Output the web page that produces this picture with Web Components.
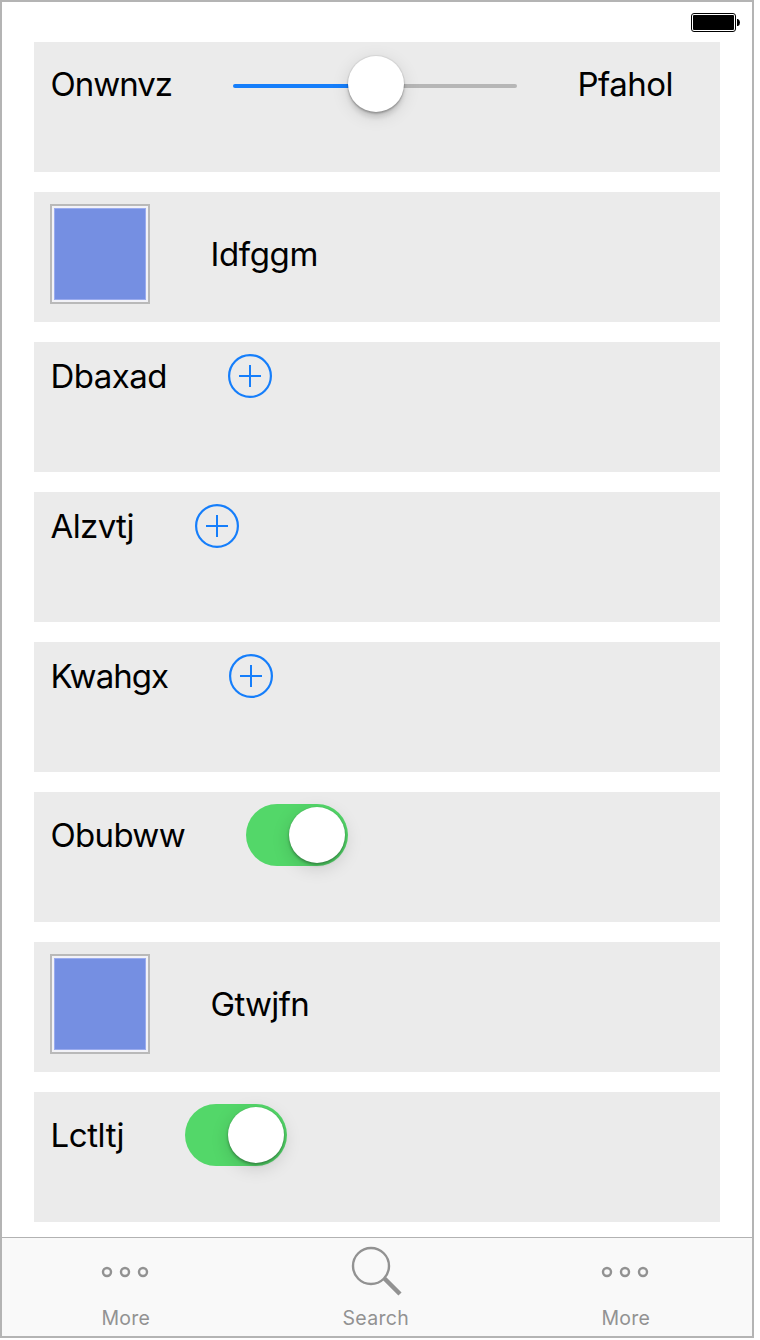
<!DOCTYPE html>
<html lang="en">
<head>
<meta charset="utf-8">
<title>Controls</title>
<style>
html, body { margin: 0; background: #fff; }
body { font-family: Inter, "Liberation Sans", sans-serif; color: #000; }
</style>
</head>
<body>
<phone-screen>
  <battery-status slot="status"></battery-status>
  <control-row><fit-label width="123">Onwnvz</fit-label><value-slider></value-slider><fit-label width="97">Pfahol</fit-label></control-row>
  <control-row><image-well></image-well><fit-label width="109">Idfggm</fit-label></control-row>
  <control-row><fit-label width="118">Dbaxad</fit-label><add-button></add-button></control-row>
  <control-row><fit-label width="85">Alzvtj</fit-label><add-button></add-button></control-row>
  <control-row><fit-label width="119">Kwahgx</fit-label><add-button></add-button></control-row>
  <control-row><fit-label width="136">Obubww</fit-label><toggle-switch></toggle-switch></control-row>
  <control-row><image-well></image-well><fit-label width="100">Gtwjfn</fit-label></control-row>
  <control-row><fit-label width="75">Lctltj</fit-label><toggle-switch></toggle-switch></control-row>
  <tab-bar slot="tabs">
    <tab-item icon="more"><fit-label width="50">More</fit-label></tab-item>
    <tab-item icon="search"><fit-label width="68">Search</fit-label></tab-item>
    <tab-item icon="more"><fit-label width="50">More</fit-label></tab-item>
  </tab-bar>
</phone-screen>
<script>
function define(name, markup, ready) {
  customElements.define(name, class extends HTMLElement {
    constructor() {
      super();
      this.attachShadow({ mode: 'open' }).innerHTML = markup;
    }
    connectedCallback() { if (ready) ready(this, this.shadowRoot); }
  });
}

define('phone-screen', `
<style>
:host { display: flex; flex-direction: column; box-sizing: border-box; width: 754px; height: 1338px; border: 2px solid #b4b4b4; background: #fff; }
.status { display: flex; justify-content: flex-end; height: 40px; padding: 11px 12px 0 0; box-sizing: border-box; }
main { flex: 1; display: flex; flex-direction: column; gap: 20px; padding: 0 32px; font-size: 33px; line-height: 40px; }
</style>
<div class="status"><slot name="status"></slot></div>
<main><slot></slot></main>
<slot name="tabs"></slot>`);

define('battery-status', `
<style>:host { display: block; width: 49px; height: 19px; } svg { display: block; }</style>
<svg width="49" height="19">
<rect x=".5" y=".5" width="44" height="18" rx="2.5" fill="#fff" stroke="#000"/>
<rect x="2" y="2" width="41" height="15" rx="1"/>
<path d="M46 6h1q2 1 2 3.500t-2 3.500h-1z"/>
</svg>`);

define('control-row', `
<style>
:host { display: block; box-sizing: border-box; height: 130px; padding: 12px 16px; background: #ebebeb; }
div { display: flex; align-items: center; gap: 60px; }
</style>
<div><slot></slot></div>`);

define('value-slider', `
<style>
:host { display: grid; place-items: center; width: 284px; height: 60px; }
.track, .thumb { grid-area: 1 / 1; }
.track { width: 284px; height: 4px; margin-top: 4px; border-radius: 2px; background: linear-gradient(90deg, #157efb 50%, #b6b6b6 50%); }
.thumb { width: 56px; height: 56px; margin-left: 2px; border-radius: 50%; background: #fff; box-shadow: 0 0 1px 1px rgba(0,0,0,.07), 0 6px 4px rgba(0,0,0,.09), 0 2px 2px rgba(0,0,0,.2), 0 4px 18px rgba(0,0,0,.12); z-index: 1; }
</style>
<div class="track"></div><div class="thumb"></div>`);

define('image-well', `
<style>
:host { display: block; box-sizing: border-box; width: 100px; height: 100px; border: 2px solid #b9b9b9; padding: 2px; background: #f2f2f7; }
div { box-sizing: border-box; height: 92px; background: #758fe2; border: 1px solid #9aabee; }
</style>
<div></div>`);

define('add-button', `
<style>:host { display: block; width: 44px; height: 44px; } svg { display: block; }</style>
<svg width="44" height="44" fill="none" stroke="#157efb" stroke-width="2">
<circle cx="22" cy="22" r="20.9" stroke-width="2.2"/><path d="M11 22h22M22 11v22"/>
</svg>`);

define('toggle-switch', `
<style>
:host { display: flex; justify-content: flex-end; align-items: center; box-sizing: border-box; width: 102px; height: 62px; padding-right: 3px; border-radius: 31px; background: #53d769; }
div { width: 56px; height: 56px; border-radius: 50%; background: #fff; box-shadow: 0 0 1px rgba(0,0,0,.15), 0 2px 3px rgba(0,0,0,.3), 0 5px 18px rgba(0,0,0,.15); }
</style>
<div></div>`);

define('tab-bar', `
<style>:host { display: grid; grid-template-columns: repeat(3, 250px); box-sizing: border-box; height: 99px; border-top: 1px solid #b2b2b2; background: #f9f9f9; }</style>
<slot></slot>`);

define('tab-item', `
<style>
:host { display: flex; flex-direction: column; align-items: center; padding: 4px 2px 0 0; color: #929292; font-size: 19.500px; line-height: 24px; }
svg { display: block; fill: none; stroke: currentColor; stroke-width: 2.4; margin: 0 2px 4px 0; }
</style>
<svg width="60" height="60"></svg><slot></slot>`, (el, root) => {
  root.querySelector('svg').innerHTML = el.getAttribute('icon') === 'search'
    ? '<circle cx="26" cy="24" r="18"/><path d="M39.500 36.500L55 52" stroke-width="4.500"/>'
    : '<circle cx="12" cy="30" r="4"/><circle cx="30" cy="30" r="4"/><circle cx="48" cy="30" r="4"/>';
});

/* Spreads its text over the given width by tracking. Defined last, so that
   it measures with the font size its container sets. */
define('fit-label', `
<style>:host { display: block; white-space: nowrap; } span { display: inline-block; margin-left: .5px; }</style>
<span><slot></slot></span>`, (el, root) => {
  const span = root.querySelector('span');
  const width = Number(el.getAttribute('width'));
  el.style.width = width + 'px';
  const natural = span.getBoundingClientRect().width;
  span.style.letterSpacing = (width - 1.500 - natural) / el.textContent.length + 'px';
});
</script>
</body>
</html>
